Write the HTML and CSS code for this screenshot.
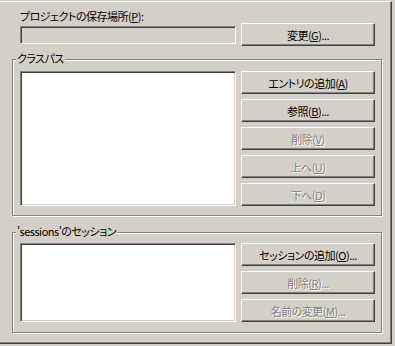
FILE: index.html
```html
<!DOCTYPE html>
<html lang="ja">
<head>
    <meta charset="UTF-8">
    <title>プロジェクト設定</title>
    <link rel="stylesheet" href="styles.css">
</head>
<body>
    <div class="page">
        <div class="location">
            <label class="location-label">プロジェクトの保存場所(<u>P</u>):</label>
            <div class="field"></div>
            <button class="btn">変更(<u>G</u>)...</button>
        </div>

        <div class="group group-classpath">
            <span class="caption">クラスパス</span>
            <div class="listbox"></div>
            <div class="buttons">
                <button class="btn">エントリの追加(<u>A</u>)</button>
                <button class="btn">参照(<u>B</u>)...</button>
                <button class="btn" disabled>削除(<u>V</u>)</button>
                <button class="btn" disabled>上へ(<u>U</u>)</button>
                <button class="btn" disabled>下へ(<u>D</u>)</button>
            </div>
        </div>

        <div class="group group-sessions">
            <span class="caption">'sessions'のセッション</span>
            <div class="listbox"></div>
            <div class="buttons">
                <button class="btn">セッションの追加(<u>O</u>)...</button>
                <button class="btn" disabled>削除(<u>R</u>)...</button>
                <button class="btn" disabled>名前の変更(<u>M</u>)...</button>
            </div>
        </div>
    </div>
</body>
</html>
```

FILE: styles.css
```css
body {
    margin: 0;
    background-color: #d4d0c8;
    font-family: "Noto Sans CJK JP", sans-serif;
    font-size: 11px;
    line-height: 14px;
    letter-spacing: -0.5px;
    font-feature-settings: "palt";
    color: #000;
    overflow: hidden;
}

/* 外枠 (タブページ) */
.page {
    box-sizing: border-box;
    width: 393px;
    height: 343px;
    margin: 1px 0 0 -1px;
    border: 1px solid;
    border-color: #fff #404040 #404040 #fff;
    box-shadow: inset -1px -1px 0 #808080;
}

.location {
    display: grid;
    grid-template-columns: 216px 134px;
    grid-template-rows: 14px 23px;
    column-gap: 5px;
    align-items: end;
    padding: 7px 0 0 20px;
}

.location-label {
    grid-column: 1 / -1;
}

.field {
    box-sizing: border-box;
    height: 18px;
    margin-bottom: 2px;
    border: 1px solid;
    border-color: #808080 #fff #fff #808080;
    box-shadow: inset 1px 1px 0 #404040, inset -1px -1px 0 #d4d0c8;
}

.btn {
    box-sizing: border-box;
    width: 134px;
    height: 23px;
    padding: 0;
    font: inherit;
    letter-spacing: inherit;
    color: #000;
    background-color: #d4d0c8;
    border: 1px solid;
    border-color: #fff #404040 #404040 #fff;
    box-shadow: inset -1px -1px 0 #808080;
}

.btn:disabled {
    color: #808080;
    text-shadow: 1px 1px 0 #fff;
}

/* グループボックス */
.group {
    position: relative;
    display: flex;
    gap: 5px;
    box-sizing: border-box;
    width: 370px;
    margin-left: 12px;
    border: 1px solid #808080;
    box-shadow: inset 1px 1px 0 #fff, 1px 1px 0 #fff;
}

.group-classpath {
    margin-top: 13px;
    padding: 11px 6px 9px 7px;
}

.group-sessions {
    margin-top: 16px;
    padding: 10px 6px 10px 7px;
}

.caption {
    position: absolute;
    top: -9px;
    left: 3px;
    padding: 0 1px;
    background-color: #d4d0c8;
}

.listbox {
    box-sizing: border-box;
    flex: 0 0 216px;
    background-color: #fff;
    border: 1px solid;
    border-color: #808080 #fff #fff #808080;
    box-shadow: inset 1px 1px 0 #404040, inset -1px -1px 0 #d4d0c8;
}

.buttons {
    display: flex;
    flex-direction: column;
    gap: 5px;
}
```
